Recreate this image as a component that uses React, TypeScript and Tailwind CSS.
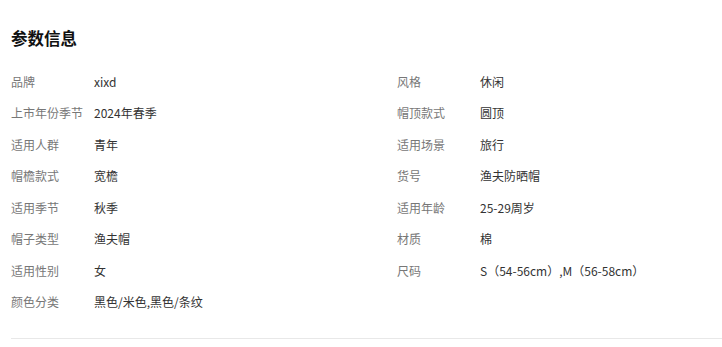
const params: [string, string][] = [
  ["品牌", "xixd"],
  ["风格", "休闲"],
  ["上市年份季节", "2024年春季"],
  ["帽顶款式", "圆顶"],
  ["适用人群", "青年"],
  ["适用场景", "旅行"],
  ["帽檐款式", "宽檐"],
  ["货号", "渔夫防晒帽"],
  ["适用季节", "秋季"],
  ["适用年龄", "25-29周岁"],
  ["帽子类型", "渔夫帽"],
  ["材质", "棉"],
  ["适用性别", "女"],
  ["尺码", "S（54-56cm）,M（56-58cm）"],
  ["颜色分类", "黑色/米色,黑色/条纹"],
];

export default function App() {
  return (
    <div
      className="w-[722px] h-[347px] bg-white pl-[11px] overflow-hidden"
      style={{ fontFamily: '"Noto Sans CJK SC", "Noto Sans", sans-serif' }}
    >
      {/* Title */}
      <h2 className="pt-[27px] h-[66px] text-[16.5px] leading-[22px] font-bold text-[#111]">参数信息</h2>

      {/* Params grid */}
      <div className="grid grid-cols-[386px_1fr]">
        {params.map(([label, value]) => (
          <div key={label} className="flex h-[31.5px] items-center text-[12px]">
            <span className="w-[83px] shrink-0 text-[#777]">{label}</span>
            <span className="text-[#333]">{value}</span>
          </div>
        ))}
      </div>

      <div className="mt-[20px] border-t border-[#e8e8e8]" />
    </div>
  );
}
